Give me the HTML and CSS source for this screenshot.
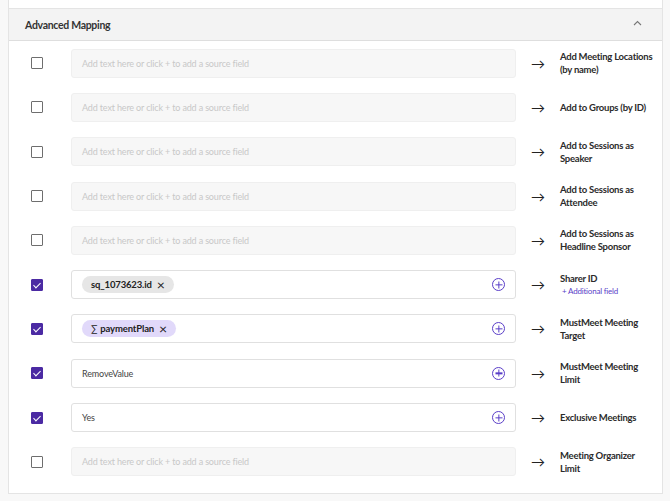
FILE: index.html
```html
<!DOCTYPE html>
<html lang="en">
<head>
  <meta charset="UTF-8" />
  <title>Advanced Mapping</title>
  <link rel="stylesheet" href="styles.css">
</head>
<body>
  <div class="panel">
    <!-- Header -->
    <div class="panel-header">
      <span class="panel-title">Advanced Mapping</span>
      <svg class="chevron" width="9" height="6" viewBox="0 0 9 6"><path d="M1 5 L4.5 1.5 L8 5" fill="none" stroke="#777" stroke-width="1.1"/></svg>
    </div>

    <div class="rows">
      <div class="row">
        <span class="check"></span>
        <div class="field empty">Add text here or click + to add a source field</div>
        <span class="arrow">&rarr;</span>
        <div class="target">Add Meeting Locations (by name)</div>
      </div>
      <div class="row">
        <span class="check"></span>
        <div class="field empty">Add text here or click + to add a source field</div>
        <span class="arrow">&rarr;</span>
        <div class="target">Add to Groups (by ID)</div>
      </div>
      <div class="row">
        <span class="check"></span>
        <div class="field empty">Add text here or click + to add a source field</div>
        <span class="arrow">&rarr;</span>
        <div class="target">Add to Sessions as Speaker</div>
      </div>
      <div class="row">
        <span class="check"></span>
        <div class="field empty">Add text here or click + to add a source field</div>
        <span class="arrow">&rarr;</span>
        <div class="target">Add to Sessions as Attendee</div>
      </div>
      <div class="row">
        <span class="check"></span>
        <div class="field empty">Add text here or click + to add a source field</div>
        <span class="arrow">&rarr;</span>
        <div class="target">Add to Sessions as Headline Sponsor</div>
      </div>
      <div class="row">
        <span class="check on"></span>
        <div class="field">
          <span class="chip">sq_1073623.id <span class="x">&times;</span></span>
          <span class="add"></span>
        </div>
        <span class="arrow">&rarr;</span>
        <div class="target">Sharer ID<div class="extra">+ Additional field</div></div>
      </div>
      <div class="row">
        <span class="check on"></span>
        <div class="field">
          <span class="chip calc"><span class="sigma">&sum;</span> paymentPlan <span class="x">&times;</span></span>
          <span class="add"></span>
        </div>
        <span class="arrow">&rarr;</span>
        <div class="target">MustMeet Meeting Target</div>
      </div>
      <div class="row">
        <span class="check on"></span>
        <div class="field">
          <span class="value">RemoveValue</span>
          <span class="add"></span>
        </div>
        <span class="arrow">&rarr;</span>
        <div class="target">MustMeet Meeting Limit</div>
      </div>
      <div class="row">
        <span class="check on"></span>
        <div class="field">
          <span class="value">Yes</span>
          <span class="add"></span>
        </div>
        <span class="arrow">&rarr;</span>
        <div class="target">Exclusive Meetings</div>
      </div>
      <div class="row">
        <span class="check"></span>
        <div class="field empty">Add text here or click + to add a source field</div>
        <span class="arrow">&rarr;</span>
        <div class="target">Meeting Organizer Limit</div>
      </div>
    </div>
  </div>
</body>
</html>
```

FILE: styles.css
```css
/* Reset */
* {
  margin: 0;
  padding: 0;
  box-sizing: border-box;
}
body {
  font-family: Lato, 'Open Sans', sans-serif;
  background-color: #f8f8f8;
  color: #2b2b2b;
}
/* Panel */
.panel {
  margin: 0 7px 0 8px;
  padding-top: 8px;
  background-color: #fff;
  border: 1px solid #e4e4e4;
  border-top: none;
}
.panel-header {
  display: flex;
  justify-content: space-between;
  align-items: center;
  height: 33px;
  padding: 0 20px 0 16px;
  background-color: #f3f3f3;
  border-top: 1px solid #e4e4e4;
  border-bottom: 1px solid #dedede;
}
.panel-title {
  font-size: 10.5px;
  letter-spacing: -0.3px;
  font-weight: bold;
  color: #333;
}
.chevron {
  margin-top: -4px;
}
/* Rows */
.rows {
  padding-bottom: 9px;
}
.row {
  display: flex;
  align-items: center;
  height: 44.3px;
}
.check {
  width: 12px;
  height: 12px;
  margin: 0 27px 0 22px;
  border: 1.5px solid #6e6e6e;
  border-radius: 1px;
  flex-shrink: 0;
}
.check.on {
  background-color: #4b2aa3;
  border-color: #4b2aa3;
  position: relative;
}
.check.on::after {
  content: "";
  position: absolute;
  left: 3px;
  top: 1px;
  width: 3px;
  height: 6px;
  border: solid #fff;
  border-width: 0 1.5px 1.5px 0;
  transform: rotate(45deg);
}
.field {
  display: flex;
  align-items: center;
  width: 445px;
  height: 29px;
  margin-left: 1px;
  padding: 0 10px;
  background-color: #fff;
  border: 1px solid #e0e0e0;
  border-radius: 3px;
  font-size: 9px;
  letter-spacing: -0.15px;
  flex-shrink: 0;
}
.field.empty {
  background-color: #f7f7f7;
  border-color: #efefef;
  color: #c8c8c8;
}
.value {
  color: #444;
  flex: 1;
}
.chip {
  display: inline-flex;
  align-items: center;
  gap: 5px;
  height: 17px;
  padding: 0 9px;
  border-radius: 9px;
  background-color: #e6e6e6;
  font-size: 9.5px;
  font-weight: bold;
  color: #222;
}
.chip.calc {
  background-color: #e1d9fa;
}
.sigma {
  font-weight: normal;
  margin-right: -2px;
}
.x {
  font-weight: normal;
  font-size: 14px;
  line-height: 1;
}
.add {
  margin-left: auto;
  width: 13px;
  height: 13px;
  border: 1.3px solid #5a3ec8;
  border-radius: 50%;
  position: relative;
}
.add::before,
.add::after {
  content: "";
  position: absolute;
  background-color: #5a3ec8;
  left: 50%;
  top: 50%;
  transform: translate(-50%, -50%);
}
.add::before {
  width: 7px;
  height: 1.3px;
}
.add::after {
  width: 1.3px;
  height: 7px;
}
.arrow {
  width: 44px;
  text-align: center;
  font-size: 14px;
  color: #222;
  flex-shrink: 0;
}
.target {
  font-size: 9.5px;
  letter-spacing: -0.25px;
  font-weight: bold;
  line-height: 13px;
  color: #2b2b2b;
  width: 94px;
}
.extra {
  font-size: 8px;
  letter-spacing: -0.2px;
  font-weight: normal;
  color: #5a3ec8;
  margin-left: 2px;
}
```
